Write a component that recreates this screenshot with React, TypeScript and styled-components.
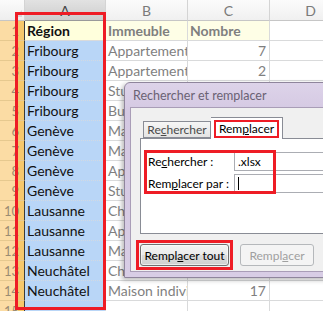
import styled, { createGlobalStyle } from "styled-components";

const GlobalStyle = createGlobalStyle`
  html, body {
    margin: 0;
    padding: 0;
    background: #ffffff;
  }
  * {
    box-sizing: border-box;
  }
`;

const Screen = styled.div`
  position: relative;
  width: 323px;
  height: 311px;
  overflow: hidden;
  background: #ffffff;
  font-family: Lato, "Liberation Sans", sans-serif;
`;

const Sheet = styled.div`
  display: grid;
  grid-template-columns: 25px 81px 82px 82px 82px;
  grid-template-rows: 21px;
  grid-auto-rows: 20px;
`;

const Corner = styled.div`
  position: relative;
  background: linear-gradient(#fbfbfb, #eeeeee);
  border-right: 1px solid #d4d4d4;
  border-bottom: 1px solid #c6c6c6;

  &::after {
    content: "";
    position: absolute;
    right: 2px;
    bottom: 3px;
    border-left: 7px solid transparent;
    border-bottom: 7px solid #d8d8d8;
  }
`;

const ColHead = styled.div<{ $selected?: boolean }>`
  display: flex;
  align-items: center;
  justify-content: center;
  font-size: 14px;
  color: ${(p) => (p.$selected ? "#444444" : "#7a7a7a")};
  background: ${(p) =>
    p.$selected ? "linear-gradient(#e2e2e2, #cdcdcd)" : "linear-gradient(#fbfbfb, #f0f0f0)"};
  border-right: 1px solid #d4d4d4;
  border-bottom: 1px solid ${(p) => (p.$selected ? "#9a9a9a" : "#c6c6c6")};
`;

const RowHead = styled.div`
  display: flex;
  align-items: center;
  justify-content: flex-end;
  padding-right: 5px;
  font-size: 13px;
  color: #9a8c72;
  background: linear-gradient(to right, #fbdca4 0 18px, #f6c86c 18px 24px);
  border-right: 1px solid #3b3b3b;
  border-bottom: 1px solid #e6c98f;
`;

const Cell = styled.div<{ $kind: "sel" | "active" | "head" | "plain"; $right?: boolean; $bold?: boolean }>`
  display: flex;
  align-items: center;
  justify-content: ${(p) => (p.$right ? "flex-end" : "flex-start")};
  padding: 0 3px 0 2px;
  overflow: hidden;
  white-space: nowrap;
  font-size: 14px;
  font-weight: ${(p) => (p.$bold ? 700 : 400)};
  color: ${(p) => (p.$kind === "sel" || p.$kind === "active" ? "#111111" : "#7f7f7f")};
  background: ${(p) =>
    p.$kind === "sel" ? "#b9d6f7" : p.$kind === "active" ? "#ffffdc" : p.$kind === "head" ? "#fefee6" : "#ffffff"};
  border-right: 1px solid #d9dadb;
  border-bottom: 1px ${(p) => (p.$kind === "sel" ? "dotted #d2d9e2" : "solid #d9dadb")};
`;

const ColumnMark = styled.div`
  position: absolute;
  left: 15px;
  top: 12px;
  width: 91px;
  height: 298px;
  border: 3px solid #ee1c25;
  pointer-events: none;
`;

/* dialog */

const Window = styled.div`
  position: absolute;
  left: 124px;
  top: 82px;
  width: 240px;
  height: 196px;
  display: flex;
  flex-direction: column;
  padding: 0 5px 5px 5px;
  border: 1px solid #8f859c;
  border-radius: 6px 6px 0 0;
  background: linear-gradient(#ddd3e9, #d4c8e2 30px, #d8cde5);
  box-shadow: -2px 2px 5px rgba(0, 0, 0, 0.28);
  font-family: Lato, "Liberation Sans", sans-serif;
  font-size: 12px;
`;

const TitleBar = styled.div`
  height: 24px;
  display: flex;
  align-items: center;
  padding-left: 3px;
  color: #6a6274;
  font-size: 12.5px;
`;

const Client = styled.div`
  flex: 1;
  display: flex;
  flex-direction: column;
  padding: 9px 0 0 9px;
  background: #f0f0f0;
  border: 1px solid #a99db7;
`;

const TabStrip = styled.div`
  display: flex;
  align-items: flex-end;
  height: 21px;
  padding-left: 3px;
  position: relative;
  z-index: 1;
`;

const Tab = styled.div<{ $active?: boolean }>`
  display: flex;
  align-items: center;
  justify-content: center;
  white-space: nowrap;
  height: ${(p) => (p.$active ? "22px" : "17px")};
  width: ${(p) => (p.$active ? "72px" : "68px")};
  margin-bottom: ${(p) => (p.$active ? "-1px" : "0")};
  background: ${(p) => (p.$active ? "#ffffff" : "linear-gradient(#f6f6f6, #e4e4e4)")};
  border: 1px solid #898c95;
  border-bottom: ${(p) => (p.$active ? "none" : "1px solid #898c95")};
  border-left: ${(p) => (p.$active ? "none" : "1px solid #898c95")};
  color: ${(p) => (p.$active ? "#000000" : "#4a4a4a")};
`;

const TabLabel = styled.span`
  padding: 0 3px;
  line-height: 14px;
  border: 2px solid #ee1c25;
`;

const Panel = styled.div`
  position: relative;
  height: 96px;
  margin-right: -20px;
  padding: 13px 0 0 7px;
  background: #ffffff;
  border: 1px solid #898c95;
  display: flex;
  flex-direction: column;
  gap: 3px;
`;

const FieldRow = styled.div`
  display: flex;
  align-items: center;
  height: 19px;
`;

const FieldLabel = styled.label`
  width: 86px;
  flex: none;
  white-space: nowrap;
  color: #000000;
`;

const Field = styled.div`
  flex: 1;
  height: 19px;
  display: flex;
  align-items: center;
  padding-left: 3px;
  background: #ffffff;
  border: 1px solid #abadb3;
  color: #000000;
`;

const Caret = styled.span`
  width: 1px;
  height: 13px;
  background: #000000;
`;

const FieldsMark = styled.div`
  position: absolute;
  left: 3px;
  top: 11px;
  width: 132px;
  height: 44px;
  border: 3px solid #ee1c25;
  pointer-events: none;
`;

const ButtonRow = styled.div`
  display: flex;
  align-items: center;
  gap: 7px;
  margin-top: 6px;
  margin-left: -4px;
`;

const ButtonMark = styled.div`
  padding: 1px;
  border: 3px solid #ee1c25;
`;

const Button = styled.button<{ $disabled?: boolean }>`
  height: 22px;
  width: ${(p) => (p.$disabled ? "74px" : "89px")};
  padding: 0;
  white-space: nowrap;
  font-family: inherit;
  font-size: 12px;
  border-radius: 3px;
  border: 1px solid ${(p) => (p.$disabled ? "#b5b8bb" : "#707070")};
  background: ${(p) =>
    p.$disabled ? "#f4f4f4" : "linear-gradient(#f2f2f2 0%, #ebebeb 50%, #dddddd 51%, #cfcfcf 100%)"};
  color: ${(p) => (p.$disabled ? "#a0a0a0" : "#000000")};
  box-shadow: ${(p) => (p.$disabled ? "none" : "inset 0 0 0 1px rgba(255,255,255,0.6)")};
`;

const U = styled.span`
  text-decoration: underline;
`;

type Row = [string, string, string];

const rows: Row[] = [
  ["Région", "Immeuble", "Nombre"],
  ["Fribourg", "Appartement", "7"],
  ["Fribourg", "Appartement", "2"],
  ["Fribourg", "Studio", "4"],
  ["Fribourg", "Bureau", "1"],
  ["Genève", "Maison", "3"],
  ["Genève", "Maison", "5"],
  ["Genève", "Appartement", "12"],
  ["Genève", "Studio", "6"],
  ["Lausanne", "Chambre", "9"],
  ["Lausanne", "Appartement", "11"],
  ["Lausanne", "Maison", "2"],
  ["Neuchâtel", "Chambre", "8"],
  ["Neuchâtel", "Maison individuelle", "17"],
  ["", "", ""],
];

export default function App() {
  return (
    <>
      <GlobalStyle />
      <Screen>
        <Sheet>
          <Corner />
          <ColHead $selected>A</ColHead>
          <ColHead>B</ColHead>
          <ColHead>C</ColHead>
          <ColHead>D</ColHead>
          {rows.map((r, i) => {
            const head = i === 0;
            return [
              <RowHead key={`h${i}`}>{i + 1}</RowHead>,
              <Cell key={`a${i}`} $kind={head ? "active" : "sel"} $bold={head}>
                {r[0]}
              </Cell>,
              <Cell key={`b${i}`} $kind={head ? "head" : "plain"} $bold={head}>
                {r[1]}
              </Cell>,
              <Cell key={`c${i}`} $kind={head ? "head" : "plain"} $bold={head} $right={!head}>
                {r[2]}
              </Cell>,
              <Cell key={`d${i}`} $kind="plain" />,
            ];
          })}
        </Sheet>
        <ColumnMark />

        <Window>
          <TitleBar>Rechercher et remplacer</TitleBar>
          <Client>
            <TabStrip>
              <Tab>
                Re<U>c</U>hercher
              </Tab>
              <Tab $active>
                <TabLabel>
                  Rem<U>p</U>lacer
                </TabLabel>
              </Tab>
            </TabStrip>
            <Panel>
              <FieldRow>
                <FieldLabel>
                  Re<U>c</U>hercher :
                </FieldLabel>
                <Field>.xlsx</Field>
              </FieldRow>
              <FieldRow>
                <FieldLabel>
                  Rem<U>p</U>lacer par :
                </FieldLabel>
                <Field>
                  <Caret />
                </Field>
              </FieldRow>
              <FieldsMark />
            </Panel>
            <ButtonRow>
              <ButtonMark>
                <Button>
                  Rempl<U>a</U>cer tout
                </Button>
              </ButtonMark>
              <Button $disabled>
                Rempl<U>a</U>cer
              </Button>
            </ButtonRow>
          </Client>
        </Window>
      </Screen>
    </>
  );
}
